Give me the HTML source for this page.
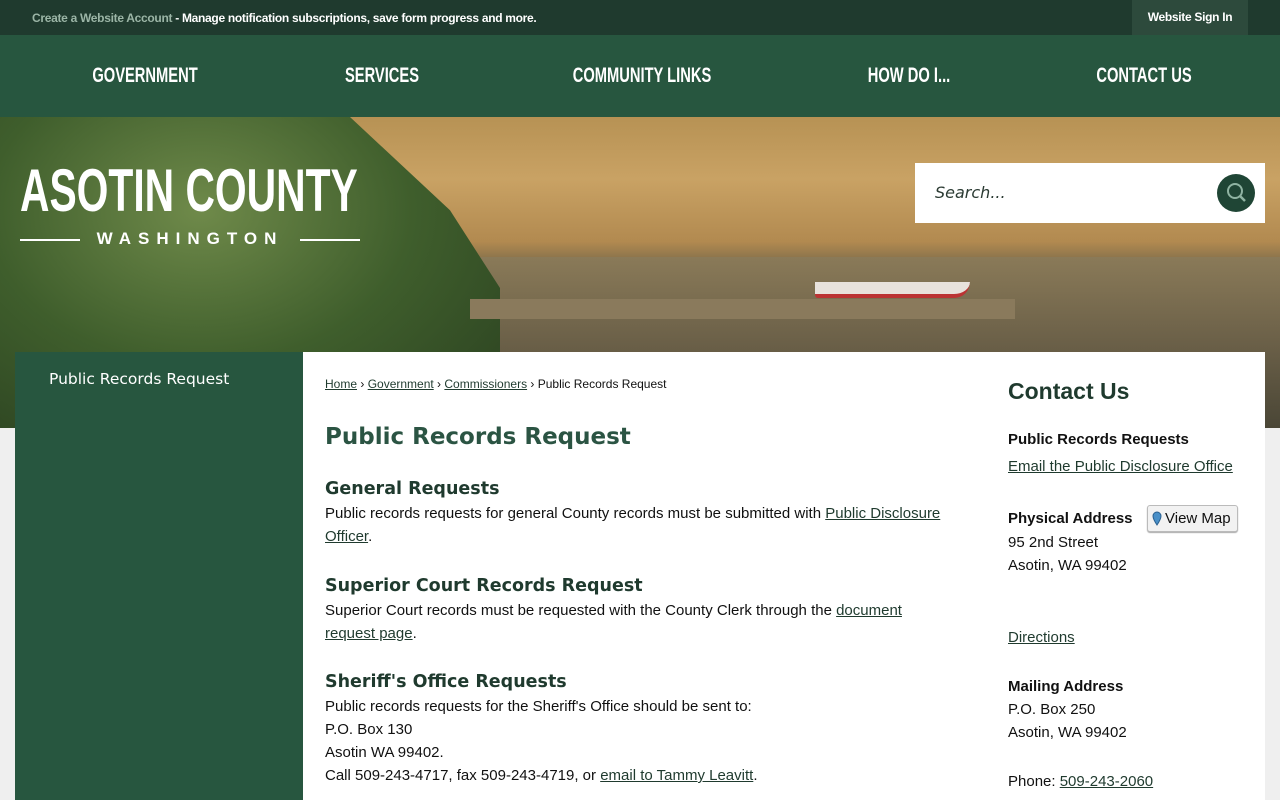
<!DOCTYPE html>
<html><head><meta charset="utf-8"><style>
*{margin:0;padding:0;box-sizing:border-box}
body{width:1280px;height:800px;overflow:hidden;background:#efefef;font-family:"Liberation Sans",Arial,sans-serif;position:relative}
.top{position:absolute;top:0;left:0;width:1280px;height:35px;background:#1f3a2e;font-size:12px;color:#fff;letter-spacing:-0.3px}
.top .msg{position:absolute;left:32px;top:11px;font-weight:bold}
.top .msg span{color:#9bb5a6}
.top .sign{position:absolute;left:1132px;top:0;width:116px;height:35px;background:#2d4a3c;text-align:center;line-height:35px;font-weight:bold}
.nav{position:absolute;top:35px;left:0;width:1280px;height:82px;background:#27563f}
.nav div{position:absolute;top:29px;color:#fff;font-weight:bold;font-size:21px;transform:translateX(-50%) scaleX(0.7);white-space:nowrap}
.hero{position:absolute;top:117px;left:0;width:1280px;height:311px;overflow:hidden;
background:linear-gradient(180deg,#b79254 0%,#c9a264 20%,#b28a50 40%,#7a6a4a 48%,#6b6048 70%,#4f4a3a 100%)}
.green{position:absolute;left:0;top:0;width:500px;height:311px;background:radial-gradient(ellipse at 40% 30%,#6f8a4a 0%,#3f5e2c 50%,#2a4020 100%);clip-path:polygon(0 0,70% 0,90% 30%,100% 55%,100% 100%,0 100%)}
.water{position:absolute;left:420px;top:140px;width:860px;height:171px;background:linear-gradient(180deg,#8a7a58,#6b6048 50%,#4a4636)}
.dock{position:absolute;left:470px;top:182px;width:545px;height:20px;background:#8a7a5c}
.boat{position:absolute;left:815px;top:165px;width:155px;height:16px;background:#e8e2dc;border-radius:0 0 40px 8px;border-bottom:4px solid #b33}
.logo{position:absolute;left:20px;top:42px;color:#fff;width:340px}
.logo h1{font-size:60px;font-weight:bold;line-height:64px;transform:scaleX(0.68);transform-origin:0 0;white-space:nowrap}
.logo .wa{position:relative;width:340px;height:20px;margin-top:6px;font-size:17px;letter-spacing:7px;text-align:center;font-weight:bold}
.logo .wa:before,.logo .wa:after{content:"";position:absolute;top:10px;width:60px;height:2px;background:#fff}
.logo .wa:before{left:0}.logo .wa:after{right:0}
.search{position:absolute;left:915px;top:46px;width:350px;height:60px;background:#fff}
.search span{position:absolute;left:20px;top:20px;font-style:italic;color:#2b3b33;font-family:"DejaVu Sans",sans-serif;font-size:16px}
.search .btn{position:absolute;left:302px;top:11px;width:38px;height:38px;border-radius:50%;background:#1f4535}
.side{position:absolute;left:15px;top:352px;width:288px;height:448px;background:#27563f;color:#fff;font-family:"DejaVu Sans",sans-serif;font-size:15.5px}
.side div{position:absolute;left:34px;top:18px}
.main{position:absolute;left:303px;top:352px;width:962px;height:448px;background:#fff;color:#111;font-size:15px}
a{color:#1f3a2e;text-decoration:underline}
.bc{position:absolute;left:22px;top:25px;font-size:12px}
.h1{position:absolute;left:22px;top:72px;font-family:"DejaVu Sans",sans-serif;font-weight:bold;font-size:23px;color:#2b5443}
.sec{position:absolute;left:22px;width:630px;line-height:23px}
.sec h2{font-family:"DejaVu Sans",sans-serif;font-size:17.5px;color:#1f3a2e;line-height:24px;margin-bottom:1px}
.ct{position:absolute;left:705px;top:1px;width:240px;line-height:23px}
.ct h3{position:absolute;top:27px;font-size:23px;color:#1f3a2e}
.ct p{position:absolute;left:0;white-space:nowrap}
.vm{position:absolute;left:139px;top:152px;width:91px;height:27px;border:1px solid #bbb;border-radius:3px;background:#f2f2f2;line-height:25px;padding-left:17px;box-shadow:0 1px 1px #aaa}
</style></head><body>
<div class="top"><div class="msg"><span>Create a Website Account</span> - Manage notification subscriptions, save form progress and more.</div><div class="sign">Website Sign In</div></div>
<div class="nav"><div style="left:145px">GOVERNMENT</div><div style="left:382px">SERVICES</div><div style="left:642px">COMMUNITY LINKS</div><div style="left:909px">HOW DO I...</div><div style="left:1144px">CONTACT US</div></div>
<div class="hero"><div class="water"></div><div class="green"></div><div class="dock"></div><div class="boat"></div>
<div class="logo"><h1>ASOTIN COUNTY</h1><div class="wa">WASHINGTON</div></div>
<div class="search"><span>Search...</span><div class="btn"><svg width="38" height="38"><circle cx="18" cy="17" r="7" fill="none" stroke="#8fb3a2" stroke-width="2"/><line x1="23" y1="22" x2="28" y2="27" stroke="#8fb3a2" stroke-width="2.5"/></svg></div></div></div>
<div class="side"><div>Public Records Request</div></div>
<div class="main">
<div class="bc"><a>Home</a> › <a>Government</a> › <a>Commissioners</a> › Public Records Request</div>
<div class="h1">Public Records Request</div>
<div class="sec" style="top:125px"><h2>General Requests</h2>Public records requests for general County records must be submitted with <a>Public Disclosure Officer</a>.</div>
<div class="sec" style="top:222px"><h2>Superior Court Records Request</h2>Superior Court records must be requested with the County Clerk through the <a>document request page</a>.</div>
<div class="sec" style="top:318px"><h2>Sheriff's Office Requests</h2>Public records requests for the Sheriff's Office should be sent to:<br>P.O. Box 130<br>Asotin WA 99402.<br>Call 509-243-4717, fax 509-243-4719, or <a>email to Tammy Leavitt</a>.</div>
<div class="ct"><h3>Contact Us</h3>
<p style="top:75px"><b>Public Records Requests</b></p>
<p style="top:102px"><a>Email the Public Disclosure Office</a></p>
<p style="top:154px"><b>Physical Address</b></p>
<div class="vm"><svg style="position:absolute;left:4px;top:5px" width="10" height="16"><path d="M5 1a4 4 0 0 1 4 4c0 3-4 9-4 9S1 8 1 5a4 4 0 0 1 4-4z" fill="#4a90c8" stroke="#2a6090"/></svg>View Map</div>
<p style="top:178px">95 2nd Street</p>
<p style="top:201px">Asotin, WA 99402</p>
<p style="top:273px"><a>Directions</a></p>
<p style="top:322px"><b>Mailing Address</b></p>
<p style="top:345px">P.O. Box 250</p>
<p style="top:368px">Asotin, WA 99402</p>
<p style="top:417px">Phone: <a>509-243-2060</a></p>
</div></div>
</body></html>
